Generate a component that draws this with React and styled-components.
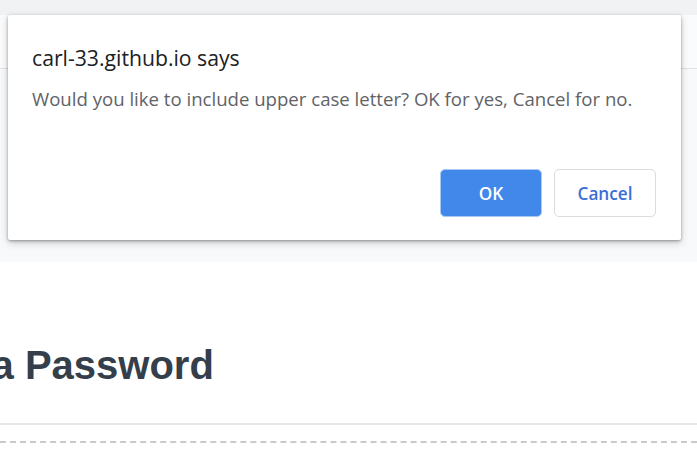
import React from "react";
import styled, { createGlobalStyle } from "styled-components";

const Global = createGlobalStyle`
  html, body { margin: 0; padding: 0; background: #ffffff; overflow: hidden; }
  body { width: 697px; height: 472px; }
  #root { position: relative; min-height: 472px; }
`;

const Page = styled.div`
  display: flex;
  flex-direction: column;
  width: 697px;
  min-height: 472px;
  overflow: hidden;
`;

const TopStrip = styled.div`
  height: 15px;
  background: #f1f2f4;
`;

const Header = styled.div`
  height: 53px;
  background: #fafbfc;
  border-bottom: 1px solid #dfe1e5;
`;

const Band = styled.div`
  height: 193px;
  background: #f8f9fb;
`;

const Main = styled.main`
  background: #ffffff;
  display: flex;
  flex-direction: column;
`;

const Hero = styled.div`
  padding: 79px 0 34px;
  border-bottom: 2px solid #e6e7e8;
  margin-left: -193px;
`;

const Title = styled.h1`
  margin: 0;
  font-family: "Liberation Sans", Arial, sans-serif;
  font-weight: 700;
  font-size: 40px;
  line-height: 48px;
  color: #343f4b;
  white-space: nowrap;
`;

const Field = styled.div`
  margin-top: 16px;
  height: 40px;
  border-top: 2px dashed #c9cacc;
`;

const Dialog = styled.div`
  position: absolute;
  top: 15px;
  left: 8px;
  width: 673px;
  height: 225px;
  box-sizing: border-box;
  background: #ffffff;
  border-radius: 2px;
  box-shadow: 0 1px 3px rgba(0, 0, 0, 0.35), 0 3px 8px rgba(0, 0, 0, 0.18);
  padding: 29px 25px 23px 24px;
  display: flex;
  flex-direction: column;
  font-family: "Open Sans", "Noto Sans", sans-serif;
`;

const DialogTitle = styled.div`
  font-size: 21.2px;
  line-height: 28px;
  color: #202124;
  white-space: nowrap;
`;

const Message = styled.div`
  margin-top: 14px;
  font-size: 18.6px;
  line-height: 26px;
  color: #5f6368;
  white-space: nowrap;
`;

const Actions = styled.div`
  margin-top: auto;
  display: flex;
  justify-content: flex-end;
  gap: 12px;
`;

const Button = styled.button`
  width: 102px;
  height: 48px;
  box-sizing: border-box;
  border-radius: 5px;
  font-family: "Open Sans", "Noto Sans", sans-serif;
  font-size: 17.2px;
  font-weight: 600;
  cursor: pointer;
  border: 1px solid ${(p) => (p.$primary ? "#a9c8f5" : "#dadce0")};
  background: ${(p) => (p.$primary ? "#4188ea" : "#ffffff")};
  color: ${(p) => (p.$primary ? "#ffffff" : "#3b6fd8")};
`;

export default function App() {
  return (
    <>
      <Global />
      <Page>
        <TopStrip />
        <Header />
        <Band />
        <Main>
          <Hero>
            <Title>Generate a Password</Title>
          </Hero>
          <Field />
        </Main>
      </Page>
      <Dialog role="alertdialog">
        <DialogTitle>carl-33.github.io says</DialogTitle>
        <Message>
          Would you like to include upper case letter? OK for yes, Cancel for no.
        </Message>
        <Actions>
          <Button $primary>OK</Button>
          <Button>Cancel</Button>
        </Actions>
      </Dialog>
    </>
  );
}
